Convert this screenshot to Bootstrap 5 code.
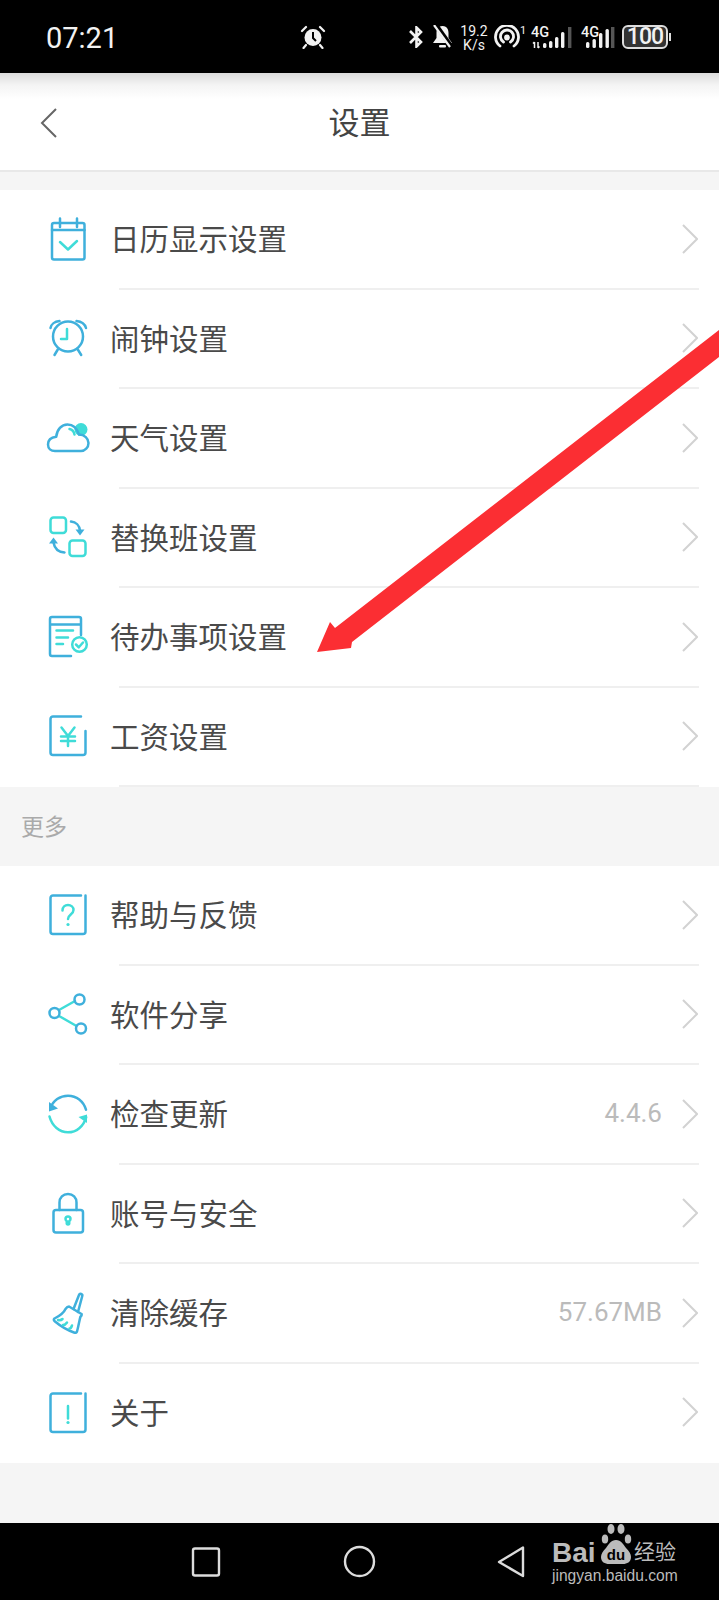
<!DOCTYPE html>
<html lang="zh-CN">
<head>
  <meta charset="UTF-8" />
  <meta name="viewport" content="width=device-width, initial-scale=1.0"/>
  <title>设置</title>
  <link href="https://cdn.jsdelivr.net/npm/bootstrap@5.3.0/dist/css/bootstrap.min.css" rel="stylesheet"/>
  <style>
    body {
      font-family: "Noto Sans CJK SC", "Noto Sans", sans-serif;
      background: #f5f5f5;
      color: #444;
      margin: 0;
    }
    .phone { width: 719px; height: 1600px; overflow: hidden; position: relative; background: #f5f5f5; }

    .status-bar { height: 73px; background: #000; color: #f2f2f2; font-family: Roboto, sans-serif; }
    .status-time { font-size: 29px; line-height: 1; width: 254px; margin-left: 46px; margin-top: 3px; }
    .status-alarm { margin-right: 82px; }
    .net-speed { width: 28px; margin: 2px 6px 0 7px; font-size: 14px; line-height: 14px; text-align: center; white-space: nowrap; }
    .status-sim { margin-left: 5px; }
    .status-sim-two { margin-left: 6px; }
    .battery-box { width: 46px; height: 24px; border: 2px solid #ddd; border-radius: 6px; font-size: 23px; font-weight: 500; line-height: 20px; text-align: center; letter-spacing: -.9px; background: #333; margin-left: 7px; }
    .battery-nub { width: 2px; height: 8px; background: #ddd; margin-left: 1px; }

    .top-bar { height: 99px; background: linear-gradient(#dcdcdc 0, #f4f4f4 12px, #fff 26px); border-bottom: 2px solid #e8e8e8; position: relative; }
    .top-title { font-size: 31px; line-height: 1; color: #444; top: 32px; }
    .back-btn { margin-left: 40px; width: 20px; padding-top: 2px; }

    .set-group { background: #fff; border-radius: 0; }
    .set-item { height: 97.5px; padding: 0 21px 0 44px; border: 0; background: transparent; color: #444; }
    .set-label { font-size: 29.5px; line-height: 1; margin-left: 18px; padding-bottom: 2px; color: #4a4a4a; }
    .set-value { font-family: Roboto, sans-serif; font-size: 26px; color: #bbb; margin-right: 20px; }
    .set-line { height: 2px; background: #efefef; margin: 0 20px 0 119px; }

    .more-band { height: 79px; padding-left: 21px; padding-bottom: 2px; font-size: 23px; color: #aaa; }
    .gap-band { height: 18px; }
    .tail-band { height: 60px; }

    .nav-strip { height: 77px; background: #000; }

    .arrow-layer { position: absolute; left: 0; top: 0; pointer-events: none; }

    .wm-mark { position: absolute; left: 552px; top: 1523px; width: 130px; height: 66px; color: #bbb; }
    .wm-bai { position: absolute; left: 0; top: 16px; font: 700 28px/1 "Liberation Sans", sans-serif; }
    .wm-cn { position: absolute; left: 82px; top: 17px; font-size: 21px; line-height: 1; }
    .wm-url { position: absolute; left: 0; top: 45px; font: 15.6px/1 "Liberation Sans", sans-serif; white-space: nowrap; }
    .wm-paw { position: absolute; left: 46px; top: 0; }

    .ic { fill: none; stroke-width: 2.5; stroke-linecap: round; stroke-linejoin: round; }
    .ic .b { stroke: #3fb0dc; }
    .ic .t { stroke: #3fdcd8; }
    .ic .bf { fill: #3fb0dc; stroke: none; }
    .ic .tf { fill: #3fdcd8; stroke: none; }
  </style>
</head>
<body>
<div class="phone">

  <!-- barra de status -->
  <div class="status-bar d-flex align-items-center">
    <div class="status-time">07:21</div>
    <svg class="status-alarm" width="26" height="24" viewBox="0 0 26 24">
      <circle cx="13" cy="12.5" r="8.5" fill="#f2f2f2"/>
      <path d="M13 7v6l3 3" fill="none" stroke="#000" stroke-width="2"/>
      <path d="M2 6l4-4M24 6l-4-4M6 20l-2.500 3M20 20l2.500 3" stroke="#f2f2f2" stroke-width="2.200" fill="none" stroke-linecap="round"/>
    </svg>
    <svg width="16" height="22" viewBox="0 0 16 22" fill="none" stroke="#f2f2f2" stroke-width="2.600">
      <path d="M2 5l11 11-4.500 4.500V1.500L13 6 2 17"/>
    </svg>
    <svg class="ms-2" width="21" height="23" viewBox="0 0 21 23">
      <path d="M10.500 1C5.500 1 4.500 5 4.500 8v5L1 18h19l-3.500-5V8c0-3-1-7-6-7z" fill="#f2f2f2"/>
      <rect x="7" y="20" width="7" height="2.400" rx="1" fill="#f2f2f2"/>
      <path d="M4 0l15 21" stroke="#000" stroke-width="4.500"/>
      <path d="M2 0l16 22" stroke="#f2f2f2" stroke-width="2.200"/>
    </svg>
    <div class="net-speed">19.2<br>K/s</div>
    <svg width="32" height="24" viewBox="0 0 32 24" fill="none" stroke="#f2f2f2" stroke-width="2.800" stroke-linecap="round">
      <path d="M6 21a11.500 11.500 0 1 1 14 0"/>
      <path d="M9.500 17a6.500 6.500 0 1 1 7 0"/>
      <circle cx="13" cy="12.500" r="1.500"/>
      <text x="26" y="9" font-size="11" font-family="Roboto" fill="#f2f2f2" stroke="none">1</text>
    </svg>
    <svg class="status-sim" width="44" height="24" viewBox="0 0 44 24">
      <text x="0" y="12" font-size="14.500" font-weight="500" font-family="Roboto" fill="#f2f2f2">4G</text>
      <path d="M3.500 23v-6M2 18.500l1.500-1.500M7 17v6M8.500 21.500L7 23" stroke="#f2f2f2" stroke-width="1.500" fill="none"/>
      <g fill="#f2f2f2">
        <rect x="12" y="18" width="3.400" height="5" rx="1.500"/>
        <rect x="18" y="16" width="3.400" height="7" rx="1.500"/>
        <rect x="24" y="12" width="3.400" height="11" rx="1.500"/>
        <rect x="30" y="7" width="3.400" height="16" rx="1.500"/>
      </g>
      <rect x="37" y="2" width="3.400" height="21" fill="#555"/>
    </svg>
    <svg class="status-sim-two" width="34" height="24" viewBox="0 0 34 24">
      <text x="0" y="12" font-size="14.500" font-weight="500" font-family="Roboto" fill="#f2f2f2">4G</text>
      <g fill="#f2f2f2">
        <rect x="5" y="17" width="3.400" height="6" rx="1.500"/>
        <rect x="11.500" y="14" width="3.400" height="9" rx="1.500"/>
        <rect x="18" y="8" width="3.400" height="15" rx="1.500"/>
        <rect x="24.500" y="4" width="3.400" height="19" rx="1.500"/>
      </g>
      <rect x="30" y="2" width="3.400" height="21" fill="#555"/>
    </svg>
    <div class="battery-box">100</div>
    <div class="battery-nub"></div>
  </div>

  <!-- cabecalho -->
  <div class="top-bar d-flex align-items-center">
    <div class="back-btn">
      <svg width="18" height="30" viewBox="0 0 18 30" fill="none" stroke="#666" stroke-width="2"><path d="M16 1L2 15l14 14"/></svg>
    </div>
    <div class="top-title position-absolute start-50 translate-middle-x">设置</div>
  </div>
  <div class="gap-band"></div>

  <!-- grupo 1 -->
  <div class="list-group list-group-flush set-group">
    <div class="list-group-item d-flex align-items-center set-item">
      <svg class="ic" width="48" height="48" viewBox="0 0 48 48"><rect class="b" x="8" y="8" width="32.500" height="36.500" rx="2"/><path class="b" d="M8 15h32.500M16 3.500V12M33 3.500V12"/><path class="t" d="M16 27l8 7.500 9-8.500"/></svg>
      <span class="set-label flex-grow-1">日历显示设置</span>
      <svg width="16" height="30" viewBox="0 0 16 30" fill="none" stroke="#d2d2d2" stroke-width="2"><path d="M1 1l14 14L1 29"/></svg>
    </div>
    <div class="set-line"></div>
    <div class="list-group-item d-flex align-items-center set-item">
      <svg class="ic" width="48" height="48" viewBox="0 0 48 48"><circle class="b" cx="24" cy="22.500" r="15"/><path class="b" d="M6.500 14c.5-3.500 4-6.500 9-7M32.500 7c5 .5 8.500 3.500 9.500 7M13.800 35.500l-3.300 5.500M33.800 35.500l3.400 5.500"/><path class="t" d="M23 15v10h-6"/></svg>
      <span class="set-label flex-grow-1">闹钟设置</span>
      <svg width="16" height="30" viewBox="0 0 16 30" fill="none" stroke="#d2d2d2" stroke-width="2"><path d="M1 1l14 14L1 29"/></svg>
    </div>
    <div class="set-line"></div>
    <div class="list-group-item d-flex align-items-center set-item">
      <svg class="ic" width="48" height="48" viewBox="0 0 48 48"><circle class="tf" cx="37" cy="15.500" r="6.500"/><path class="b" d="M11 37h26c4 0 7.500-3.500 7.500-8s-4-8.500-9.500-8.500C33 14.500 29 10.500 23.500 10.500c-6 0-10.500 5-11.300 12.300C7 23.500 4 26.500 4 30.500S7 37 11 37z"/><path class="t" d="M25.500 15c2.500.5 4.500 3 5 5.500"/></svg>
      <span class="set-label flex-grow-1">天气设置</span>
      <svg width="16" height="30" viewBox="0 0 16 30" fill="none" stroke="#d2d2d2" stroke-width="2"><path d="M1 1l14 14L1 29"/></svg>
    </div>
    <div class="set-line"></div>
    <div class="list-group-item d-flex align-items-center set-item">
      <svg class="ic" width="48" height="48" viewBox="0 0 48 48"><rect class="t" x="6.500" y="4.500" width="15.500" height="15.500" rx="3"/><rect class="t" x="25.500" y="27.500" width="16" height="15.500" rx="3"/><path class="b" d="M27 8.500c5 .5 8.500 4 9 9"/><path class="bf" d="M31.500 16.500h9l-4.500 6z"/><path class="b" d="M20.500 39.500c-6-.5-10-4-11-10"/><path class="bf" d="M5 30.500h9l-4.500-6z"/></svg>
      <span class="set-label flex-grow-1">替换班设置</span>
      <svg width="16" height="30" viewBox="0 0 16 30" fill="none" stroke="#d2d2d2" stroke-width="2"><path d="M1 1l14 14L1 29"/></svg>
    </div>
    <div class="set-line"></div>
    <div class="list-group-item d-flex align-items-center set-item">
      <svg class="ic" width="48" height="48" viewBox="0 0 48 48"><path class="b" d="M37 22V6a2 2 0 0 0-2-2H8a2 2 0 0 0-2 2v35a2 2 0 0 0 2 2h19M6 11.500h31"/><path class="t" d="M12.500 17.500H29M12.500 24.500H24M12.500 31H19"/><circle class="t" cx="35.500" cy="31.500" r="7.300"/><path class="t" d="M32 31.500l2.800 2.800 4.200-4.800"/></svg>
      <span class="set-label flex-grow-1">待办事项设置</span>
      <svg width="16" height="30" viewBox="0 0 16 30" fill="none" stroke="#d2d2d2" stroke-width="2"><path d="M1 1l14 14L1 29"/></svg>
    </div>
    <div class="set-line"></div>
    <div class="list-group-item d-flex align-items-center set-item">
      <svg class="ic" width="48" height="48" viewBox="0 0 48 48"><path class="b" d="M37 4.500H9a2.500 2.500 0 0 0-2.500 2.500v33.500A2.500 2.500 0 0 0 9 43h30a2.500 2.500 0 0 0 2.500-2.500V19"/><path class="t" d="M17.500 15.500l6.500 8.500 6.500-8.500M17 24.500h14M17 29h14M24 24v10"/></svg>
      <span class="set-label flex-grow-1">工资设置</span>
      <svg width="16" height="30" viewBox="0 0 16 30" fill="none" stroke="#d2d2d2" stroke-width="2"><path d="M1 1l14 14L1 29"/></svg>
    </div>
    <div class="set-line"></div>
  </div>

  <div class="more-band d-flex align-items-center">更多</div>

  <!-- grupo 2 -->
  <div class="list-group list-group-flush set-group">
    <div class="list-group-item d-flex align-items-center set-item">
      <svg class="ic" width="48" height="48" viewBox="0 0 48 48"><path class="b" d="M37 4.500H9A2.500 2.500 0 0 0 6.500 7v33.500A2.500 2.500 0 0 0 9 43h30a2.500 2.500 0 0 0 2.500-2.500V4.500"/><path class="t" d="M18.500 19.500c0-3.300 2.500-5.500 5.500-5.500s5.500 2.200 5.500 5c0 4.500-5.500 4.500-5.500 9"/><circle class="tf" cx="24" cy="33.500" r="1.600"/></svg>
      <span class="set-label flex-grow-1">帮助与反馈</span>
      <svg width="16" height="30" viewBox="0 0 16 30" fill="none" stroke="#d2d2d2" stroke-width="2"><path d="M1 1l14 14L1 29"/></svg>
    </div>
    <div class="set-line"></div>
    <div class="list-group-item d-flex align-items-center set-item">
      <svg class="ic" width="48" height="48" viewBox="0 0 48 48"><path class="t" d="M15 20l16-9M15 26l17.500 10"/><circle class="b" cx="35.500" cy="9.500" r="5"/><circle class="b" cx="10.500" cy="23" r="5"/><circle class="b" cx="37" cy="38.500" r="5"/></svg>
      <span class="set-label flex-grow-1">软件分享</span>
      <svg width="16" height="30" viewBox="0 0 16 30" fill="none" stroke="#d2d2d2" stroke-width="2"><path d="M1 1l14 14L1 29"/></svg>
    </div>
    <div class="set-line"></div>
    <div class="list-group-item d-flex align-items-center set-item">
      <svg class="ic" width="48" height="48" viewBox="0 0 48 48"><path class="b" d="M6.500 18C9 10.500 16 5.700 24 5.700c8.500 0 15.500 5.500 18 14"/><path class="bf" d="M5 12l9 6.500-9 3z"/><path class="t" d="M5.500 26.500C8 36 15.500 42.300 24 42.300s15.500-6 18.200-15"/><path class="tf" d="M43 33l-8.500-6 8.500-2.500z"/></svg>
      <span class="set-label flex-grow-1">检查更新</span>
      <span class="set-value">4.4.6</span>
      <svg width="16" height="30" viewBox="0 0 16 30" fill="none" stroke="#d2d2d2" stroke-width="2"><path d="M1 1l14 14L1 29"/></svg>
    </div>
    <div class="set-line"></div>
    <div class="list-group-item d-flex align-items-center set-item">
      <svg class="ic" width="48" height="48" viewBox="0 0 48 48"><rect class="b" x="9.500" y="21" width="29.500" height="22.500" rx="2.500"/><path class="b" d="M15.500 21v-7.500C15.500 8.500 19 5 24 5s8.500 3.500 8.500 8.500V21"/><path class="t" d="M24 35.500c-1 0-1.300-.8-1.300-1.500l.3-1.700c-1-.5-1.500-1.300-1.500-2.300a2.500 2.500 0 0 1 5 0c0 1-.5 1.800-1.500 2.300l.3 1.700c0 .7-.3 1.500-1.300 1.500z"/></svg>
      <span class="set-label flex-grow-1">账号与安全</span>
      <svg width="16" height="30" viewBox="0 0 16 30" fill="none" stroke="#d2d2d2" stroke-width="2"><path d="M1 1l14 14L1 29"/></svg>
    </div>
    <div class="set-line"></div>
    <div class="list-group-item d-flex align-items-center set-item">
      <svg class="ic" width="48" height="48" viewBox="0 0 48 48"><path class="b" d="M29.500 20L35 6a1.700 1.700 0 0 1 3.200 1.200L34 23"/><path class="b" d="M25 17.500L37.500 25c.5.500 0 2-1 2.500-1 3-2 10-3.500 15-.5 1.500-1.500 1.500-3 1-7-2.500-13-6-19-11-1.500-1.300-1.500-2-.5-3 4-2 9-5 11-9.500 1-1.500 2-2.500 3.500-2.500z"/><path class="t" d="M14 31c2 .5 3.500 0 4.500-1M19 36c1.500 0 3-1 4-2.500M25.500 39.500c1 0 2-1.500 2.500-3"/></svg>
      <span class="set-label flex-grow-1">清除缓存</span>
      <span class="set-value">57.67MB</span>
      <svg width="16" height="30" viewBox="0 0 16 30" fill="none" stroke="#d2d2d2" stroke-width="2"><path d="M1 1l14 14L1 29"/></svg>
    </div>
    <div class="set-line"></div>
    <div class="list-group-item d-flex align-items-center set-item">
      <svg class="ic" width="48" height="48" viewBox="0 0 48 48"><path class="b" d="M37 5.500H9A2.500 2.500 0 0 0 6.500 8v33.500A2.500 2.500 0 0 0 9 44h30a2.500 2.500 0 0 0 2.500-2.500V5.500"/><path class="t" d="M24 18v12.500"/><circle class="tf" cx="24" cy="34.500" r="1.600"/></svg>
      <span class="set-label flex-grow-1">关于</span>
      <svg width="16" height="30" viewBox="0 0 16 30" fill="none" stroke="#d2d2d2" stroke-width="2"><path d="M1 1l14 14L1 29"/></svg>
    </div>
    <div class="set-line bg-white"></div>
  </div>

  <div class="tail-band"></div>

  <!-- barra de navegacao -->
  <div class="nav-strip"></div>
  <svg class="arrow-layer" width="719" height="1600" viewBox="0 0 719 1600">
    <g fill="none" stroke="#dcdcdc" stroke-width="2.400" stroke-linejoin="round">
      <rect x="193" y="1548.500" width="26" height="27" rx="2"/>
      <circle cx="359.500" cy="1561.500" r="14.500"/>
      <path d="M523 1547.500v28.500l-24-14z"/>
    </g>
    <path d="M719 330V357L352 642l-1 6-34 4 13-30 5 6z" fill="#fb2e33"/>
  </svg>

  <!-- marca d'agua -->
  <div class="wm-mark">
    <span class="wm-bai">Bai</span>
    <svg class="wm-paw" width="36" height="42" viewBox="0 0 36 42">
      <g fill="#bbb">
        <ellipse cx="7" cy="16" rx="3.200" ry="4.500"/>
        <ellipse cx="13" cy="6" rx="3.500" ry="5"/>
        <ellipse cx="23" cy="6" rx="3.500" ry="5"/>
        <ellipse cx="30" cy="16" rx="3.200" ry="4.500"/>
        <path d="M18 17c5 0 7 4 10 8 3 3 5 6 5 9 0 5-4 7-8 7H11c-4 0-8-2-8-7 0-3 2-6 5-9 3-4 5-8 10-8z"/>
      </g>
      <text x="18" y="37" text-anchor="middle" font-family="Liberation Sans" font-weight="700" font-size="15" fill="#000">du</text>
    </svg>
    <span class="wm-cn">经验</span>
    <span class="wm-url">jingyan.baidu.com</span>
  </div>

</div>
<script src="https://cdn.jsdelivr.net/npm/bootstrap@5.3.0/dist/js/bootstrap.bundle.min.js"></script>
</body>
</html>
